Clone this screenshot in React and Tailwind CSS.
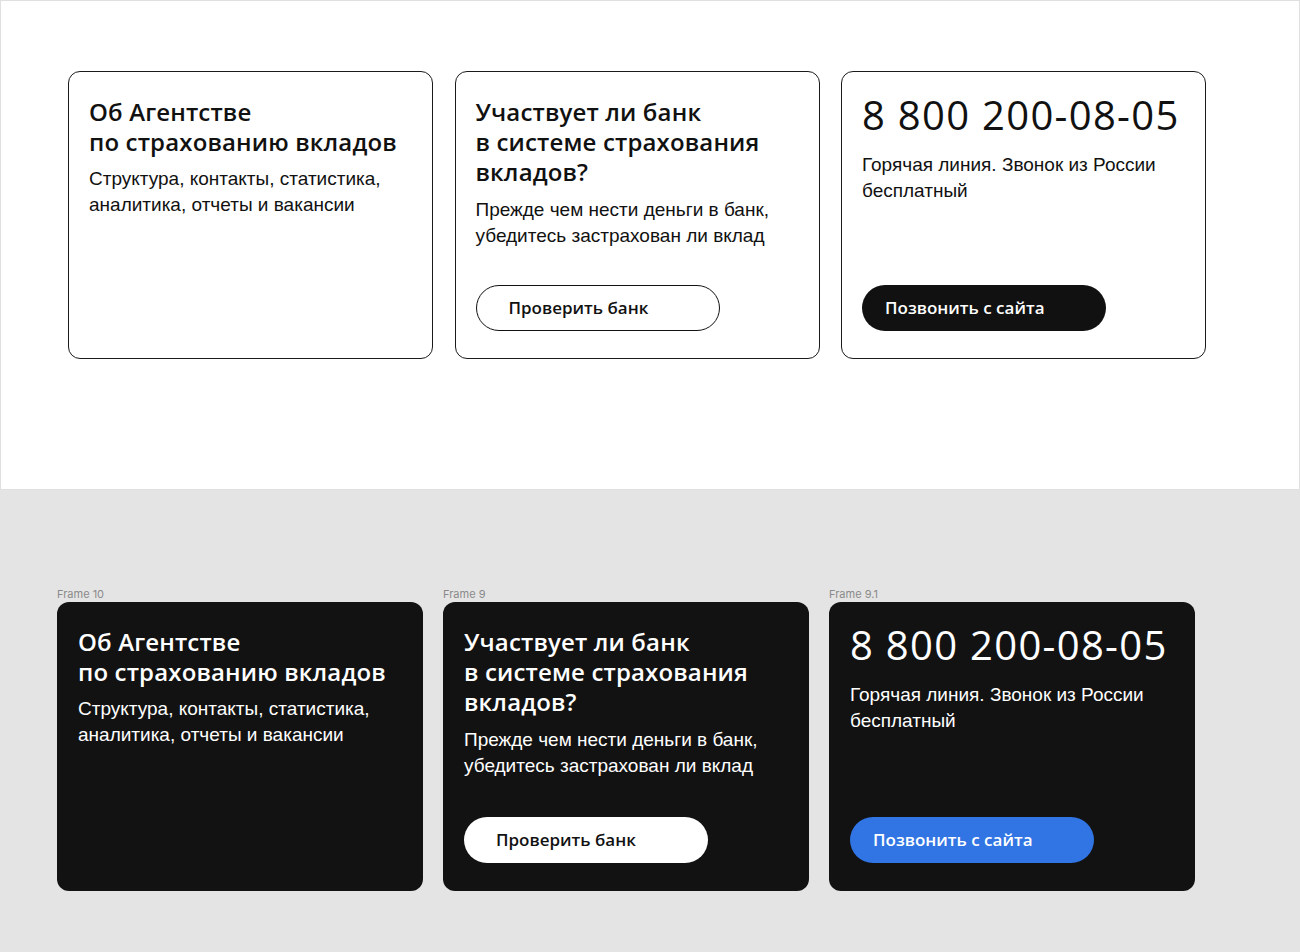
import React from "react";

const head = { fontFamily: '"Open Sans", "Noto Sans", sans-serif' };
const body = { fontFamily: '"Liberation Sans", Arial, sans-serif' };

function Card({ dark, children }) {
  return (
    <div
      className={
        "flex flex-col h-[288px] w-[365px] rounded-[12px] pt-[25px] " +
        (dark
          ? "bg-[#121212] text-white pb-[28px] pl-[21px] pr-[20px]"
          : "border-[1.5px] border-[#1a1a1a] bg-white text-[#111] pb-[27px] px-[20px]")
      }
    >
      {children}
    </div>
  );
}

function Heading({ children }) {
  return (
    <div className="text-[24px] leading-[30px] font-semibold tracking-[0.15px]" style={head}>
      {children}
    </div>
  );
}

function Body({ children, className = "" }) {
  return (
    <div className={"text-[19px] leading-[26px] " + className} style={body}>
      {children}
    </div>
  );
}

function Btn({ variant, pad, children }) {
  const cls =
    variant === "outline"
      ? "border-[1.5px] border-[#111] bg-white text-[#111]"
      : variant === "black"
      ? "bg-[#111] text-white"
      : variant === "white"
      ? "bg-white text-[#111]"
      : "bg-[#3174e3] text-white";
  return (
    <div
      className={
        "mt-auto flex h-[46px] w-[244px] items-center rounded-full text-[17px] font-semibold " + pad + " " + cls
      }
      style={head}
    >
      {children}
    </div>
  );
}

function Cards({ dark }) {
  return (
    <>
      <Card dark={dark}>
        <Heading>
          Об Агентстве
          <br />
          по страхованию вкладов
        </Heading>
        <Body className="mt-[9px]">
          Структура, контакты, статистика,
          <br />
          аналитика, отчеты и вакансии
        </Body>
      </Card>
      <Card dark={dark}>
        <Heading>
          Участвует ли банк
          <br />в системе страхования
          <br />
          вкладов?
        </Heading>
        <Body className="mt-[10px]">
          Прежде чем нести деньги в банк,
          <br />
          убедитесь застрахован ли вклад
        </Body>
        <Btn variant={dark ? "white" : "outline"} pad="pl-[32px]">
          Проверить банк
        </Btn>
      </Card>
      <Card dark={dark}>
        <div className="text-[40px] leading-[36px] font-medium tracking-[1.3px]" style={head}>
          8 800 200-08-05
        </div>
        <Body className="mt-[19px]">
          Горячая линия. Звонок из России
          <br />
          бесплатный
        </Body>
        <Btn variant={dark ? "blue" : "black"} pad="pl-[23px]">
          Позвонить с сайта
        </Btn>
      </Card>
    </>
  );
}

export default function App() {
  const labels = ["Frame 10", "Frame 9", "Frame 9.1"];
  return (
    <div className="h-[952px] w-[1300px] bg-[#e4e4e4] overflow-hidden">
      <div className="h-[490px] border border-[#e0e0e0] bg-white pl-[67px] pt-[70px]">
        <div className="flex gap-[21.5px]">
          <Cards dark={false} />
        </div>
      </div>
      <div className="pl-[57px] pt-[98px]">
        <div className="flex gap-[20px]">
          {[0, 1, 2].map((i) => (
            <div
              key={i}
              className="w-[366px] text-[11px] leading-[13px] text-[#8a8a8a]"
              style={{ fontFamily: "Inter, sans-serif" }}
            >
              {labels[i]}
            </div>
          ))}
        </div>
        <div className="mt-[1px] flex gap-[20px] [&>div]:w-[366px] [&>div]:h-[289px]">
          <Cards dark={true} />
        </div>
      </div>
    </div>
  );
}
